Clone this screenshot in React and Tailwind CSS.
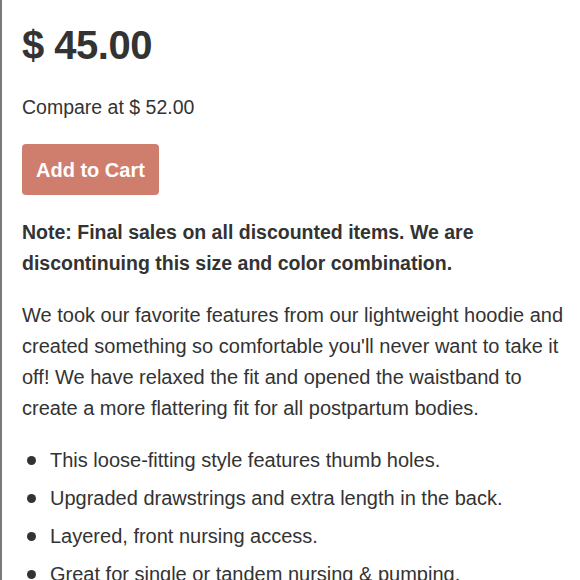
export default function App() {
  const bullets = [
    "This loose-fitting style features thumb holes.",
    "Upgraded drawstrings and extra length in the back.",
    "Layered, front nursing access.",
    "Great for single or tandem nursing & pumping.",
  ];

  return (
    <div
      className="h-[580px] w-[580px] overflow-hidden border-l-2 border-[#7a7a7a] bg-white pl-5 pr-[10px] text-[#333333]"
      style={{ fontFamily: '"Liberation Sans", Arial, sans-serif' }}
    >
      <h1 className="pt-[22px] text-[40px] font-bold leading-[46px] tracking-[-0.5px]">
        $ 45.00
      </h1>
      <p className="mt-[27px] text-[19.5px] leading-[24px]">Compare at $ 52.00</p>
      <button className="mt-[25px] h-[51px] rounded-[4px] bg-[#cf7e6d] px-[14px] text-[20px] font-bold text-white">
        Add to Cart
      </button>
      <p className="mt-[22px] text-[19.5px] font-bold leading-[31px]">
        Note: Final sales on all discounted items. We are discontinuing this
        size and color combination.
      </p>
      <p className="mt-[21px] text-[20px] leading-[31px]">
        We took our favorite features from our lightweight hoodie and created
        something so comfortable you'll never want to take it off! We have
        relaxed the fit and opened the waistband to create a more flattering fit
        for all postpartum bodies.
      </p>
      <ul className="mt-[24px] text-[20px] leading-[24px]">
        {bullets.map((b) => (
          <li key={b} className="mb-[14px] flex items-center">
            <span className="ml-[5px] mr-[14px] h-[9px] w-[9px] shrink-0 rounded-full bg-[#333333]" />
            <span>{b}</span>
          </li>
        ))}
      </ul>
    </div>
  );
}
